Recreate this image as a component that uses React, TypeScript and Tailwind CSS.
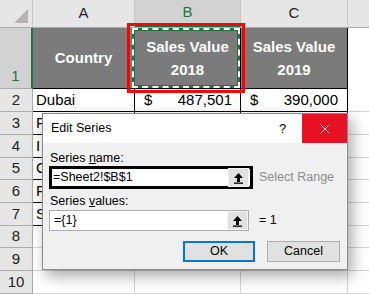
import { X } from 'lucide-react'

const rowHeights = [23, 23, 22, 23, 23, 22, 23, 23]
const names = ['F', 'I', 'C', 'F', 'S', '', '', '']

const ArrowBtn = () => (
  <div className="w-[21px] h-[19px] shrink-0 bg-[#e1e1e1] border border-[#f4f4f4] flex items-center justify-center">
    <svg width="11" height="12" viewBox="0 0 11 12">
      <path d="M5.5 1 L10 6 H7 V10 H4 V6 H1 Z" fill="#000" />
      <rect x="1" y="10.5" width="9" height="1.3" fill="#000" />
    </svg>
  </div>
)

export default function App() {
  return (
    <div className="relative w-[369px] h-[294px] overflow-hidden bg-white" style={{ fontFamily: '"Liberation Sans", Arial, sans-serif' }}>
      {/* column letters */}
      <div className="flex h-[28px] bg-[#e6e6e6] border-b border-[#ababab] text-[15px] text-[#222]">
        <div className="w-[33px] relative border-r border-[#c6c6c6]">
          <div className="absolute right-[4px] bottom-[4px] w-0 h-0 border-l-[14px] border-l-transparent border-b-[14px] border-b-[#b4b4b4]" />
        </div>
        <div className="w-[102px] flex items-center justify-center border-r border-[#c6c6c6]">A</div>
        <div className="w-[106px] flex items-center justify-center bg-[#d2d2d2] border-b-2 border-[#217346] text-[#217346] border-r border-r-[#c6c6c6]">B</div>
        <div className="w-[107px] flex items-center justify-center border-r border-[#c6c6c6]">C</div>
        <div className="flex-1" />
      </div>

      {/* row 1 */}
      <div className="flex h-[61px]">
        <div className="w-[33px] bg-[#d2d2d2] border-r-2 border-[#217346] border-b border-b-[#ababab] text-[15px] text-[#217346] flex items-end justify-center pb-[1px]">1</div>
        <div className="w-[102px] bg-[#7b7b7b] border-r border-b border-black text-white font-bold text-[15px] flex items-center justify-center">Country</div>
        <div className="w-[106px] bg-[#7b7b7b] border-r border-b border-black text-white font-bold text-[15px] leading-[23px] flex flex-col items-center justify-center">
          <span>Sales Value</span>
          <span>2018</span>
        </div>
        <div className="w-[107px] bg-[#7b7b7b] border-r border-b border-black text-white font-bold text-[15px] leading-[23px] flex flex-col items-center justify-center">
          <span>Sales Value</span>
          <span>2019</span>
        </div>
        <div className="flex-1" />
      </div>

      {/* row 2 */}
      <div className="flex h-[23px] text-[15px] text-black">
        <div className="w-[33px] bg-[#e6e6e6] border-r border-b border-[#ababab] text-[#222] flex items-center justify-center">2</div>
        <div className="w-[102px] border-r border-b border-black px-[3px] flex items-center">Dubai</div>
        <div className="w-[106px] border-r border-b border-black pl-[9px] pr-[8px] flex items-center justify-between">
          <span>$</span>
          <span>487,501</span>
        </div>
        <div className="w-[107px] border-r border-b border-black pl-[9px] pr-[9px] flex items-center justify-between">
          <span>$</span>
          <span>390,000</span>
        </div>
        <div className="flex-1 border-b border-[#d4d4d4]" />
      </div>

      {/* rows 3-10 */}
      {rowHeights.map((h, i) => {
        const line = i < 5 ? 'border-black' : 'border-[#d4d4d4]'
        return (
          <div key={i} className="flex text-[15px]" style={{ height: h }}>
            <div className="w-[33px] bg-[#e6e6e6] border-r border-b border-[#ababab] text-[#222] flex items-center justify-center">{i + 3}</div>
            <div className={`w-[102px] border-r border-b ${line} px-[3px] flex items-center overflow-hidden`}>{names[i]}</div>
            <div className={`w-[106px] border-r border-b ${line}`} />
            <div className={`w-[107px] border-r border-b ${line}`} />
            <div className="flex-1 border-b border-[#d4d4d4]" />
          </div>
        )
      })}

      {/* copy marquee on B1 */}
      <div className="absolute left-[127px] top-[23px] w-[118px] h-[70px] border-[3px] border-[#ff0000] p-[2px]">
        <div className="relative w-full h-full border-[3px] border-[#217346]">
          <div className="absolute -inset-[3px] border-[2px] border-dashed border-white" />
        </div>
      </div>

      {/* dialog */}
      <div className="absolute left-[42px] top-[113px] w-[306px] h-[157px] bg-[#f0f0f0] border border-[#8a8a8a] shadow-[4px_6px_14px_rgba(0,0,0,0.35)] text-[12.5px] text-black">
        <div className="h-[29px] bg-white flex items-center">
          <span className="pl-[8px] flex-1">Edit Series</span>
          <span className="w-[20px] text-[13px]">?</span>
          <div className="w-[45px] h-full bg-[#e81123] flex items-center justify-center ml-[3px]">
            <X size={16} strokeWidth={1.3} color="#fff" />
          </div>
        </div>

        <div className="pl-[6px] pt-[8px] flex flex-col">
          <div className="h-[14px] pl-[1px] leading-[14px]">Series <span className="underline">n</span>ame:</div>
          <div className="flex items-center mt-[1px] h-[23px]">
            <div className="w-[204px] shrink-0 h-[23px] border-[3px] border-black bg-white flex items-center justify-between pl-[1px] pr-[1px]">
              <span>=Sheet2!$B$1</span>
              <ArrowBtn />
            </div>
            <span className="ml-[6px] text-[#8d8d8d]">Select Range</span>
          </div>
          <div className="h-[14px] pl-[1px] leading-[14px] mt-[5px]">Series <span className="underline">v</span>alues:</div>
          <div className="flex items-center mt-[2px] h-[21px]">
            <div className="w-[200px] shrink-0 h-[21px] border border-[#adadad] bg-white flex items-center justify-between pl-[4px]">
              <span>={'{1}'}</span>
              <ArrowBtn />
            </div>
            <span className="ml-[10px]">= 1</span>
          </div>
          <div className="flex mt-[10px] ml-[134px] gap-[12px]">
            <div className="w-[72px] h-[21px] border-2 border-[#0078d7] bg-[#e1e1e1] flex items-center justify-center">OK</div>
            <div className="w-[73px] h-[21px] border border-[#adadad] bg-[#e1e1e1] flex items-center justify-center">Cancel</div>
          </div>
        </div>
      </div>
    </div>
  )
}
